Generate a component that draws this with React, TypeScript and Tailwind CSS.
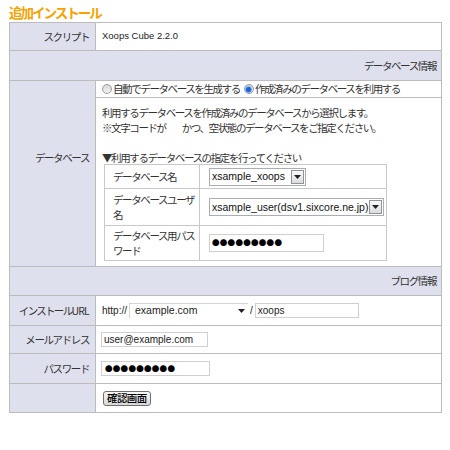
import React from "react";

function Radio({ checked }: { checked: boolean }) {
  return (
    <span className="inline-flex items-center justify-center w-[10px] h-[10px] rounded-full border border-[#9a9a9a] bg-gradient-to-b from-[#d6d6d6] to-[#f6f6f6] mr-[1px]">
      {checked ? <span className="w-[5px] h-[5px] rounded-full bg-[#1b62d6] ring-1 ring-[#7fb0f0]" /> : null}
    </span>
  );
}

function Arrow() {
  return (
    <svg width="7" height="4" viewBox="0 0 7 4">
      <path d="M0 0 L7 0 L3.5 4 Z" fill="#222" />
    </svg>
  );
}

function SelectBox({ text, cls }: { text: string; cls: string }) {
  return (
    <div className={"flex items-center h-[18px] border border-[#a9aeb6] bg-white " + cls}>
      <span className="flex-1 pl-[2px] font-['Liberation_Sans',sans-serif] text-[10.5px] tracking-normal text-[#111] leading-none whitespace-nowrap">{text}</span>
      <span className="flex items-center justify-center w-[13px] h-[14px] mr-[1px] border border-[#8e949c] bg-gradient-to-b from-[#fafafa] to-[#dcdcdc]">
        <Arrow />
      </span>
    </div>
  );
}

function Dots({ n }: { n: number }) {
  return (
    <span className="font-['Noto_Sans_CJK_JP',sans-serif] text-[7.5px] tracking-[0.3px] leading-none text-black">{"●".repeat(n)}</span>
  );
}

export default function App() {
  const line = "border-[#bcbcbc]";
  return (
    <div className="w-[450px] h-[450px] bg-white text-[#333] font-['Noto_Sans_CJK_JP',sans-serif] text-[10.5px] tracking-[-1.4px]">
      <div className="pl-[9px] h-[22px] pt-[4px] text-[13.5px] tracking-[-2px] leading-[16px] font-bold text-[#f5a300] whitespace-nowrap">追加インストール</div>
      <div className={"ml-[9px] w-[433px] border " + line}>
        {/* スクリプト */}
        <div className={"flex h-[28px] border-b " + line}>
          <div className={"w-[86px] shrink-0 border-r bg-[#dfe0ed] flex items-center justify-end pr-[6px] whitespace-nowrap " + line}>スクリプト</div>
          <div className="flex-1 flex items-center pl-[6px] font-['Liberation_Sans',sans-serif] text-[9.5px] tracking-normal text-[#222]">Xoops Cube 2.2.0</div>
        </div>
        {/* header */}
        <div className={"flex h-[30px] border-b bg-[#dfe0ed] items-center justify-end pr-[5px] " + line}>データベース情報</div>
        {/* database */}
        <div className={"flex h-[186px] border-b " + line}>
          <div className={"w-[86px] shrink-0 border-r bg-[#dfe0ed] flex justify-end pr-[6px] pt-[69px] leading-[15px] whitespace-nowrap " + line}>データベース</div>
          <div className="flex-1 flex flex-col">
            <div className={"h-[17px] border-b flex items-center pl-[6px] whitespace-nowrap " + line}>
              <Radio checked={false} />
              <span>自動でデータベースを生成する</span>
              <span className="w-[4px]" />
              <Radio checked={true} />
              <span>作成済みのデータベースを利用する</span>
            </div>
            <div className="pl-[6px] pt-[7px] leading-[15px] whitespace-nowrap">
              <div>利用するデータベースを作成済みのデータベースから選択します。</div>
              <div className="flex">
                <span>※文字コードが</span>
                <span className="inline-block w-[16px]" />
                <span>かつ、空状態のデータベースをご指定ください。</span>
              </div>
              <div className="h-[15px]" />
              <div>▼利用するデータベースの指定を行ってください</div>
              <div className="ml-[2px] w-[283px] border border-[#c8c8c8] mt-[-1px]">
                <div className="flex h-[24px] border-b border-[#c8c8c8]">
                  <div className="w-[95px] shrink-0 border-r border-[#c8c8c8] flex items-center pl-[8px]">データベース名</div>
                  <div className="flex-1 flex items-center pl-[9px]">
                    <SelectBox text="xsample_xoops" cls="w-[97px]" />
                  </div>
                </div>
                <div className="flex h-[37px] border-b border-[#c8c8c8]">
                  <div className="w-[95px] shrink-0 border-r border-[#c8c8c8] flex flex-col justify-center pl-[8px]">
                    <span>データベースユーザ</span>
                    <span>名</span>
                  </div>
                  <div className="flex-1 flex items-center pl-[9px]">
                    <SelectBox text="xsample_user(dsv1.sixcore.ne.jp)" cls="w-[175px]" />
                  </div>
                </div>
                <div className="flex h-[34px]">
                  <div className="w-[95px] shrink-0 border-r border-[#c8c8c8] flex flex-col justify-center pl-[8px]">
                    <span>データベース用パス</span>
                    <span>ワード</span>
                  </div>
                  <div className="flex-1 flex items-center pl-[9px]">
                    <div className="w-[115px] h-[18px] border border-[#d0d0d0] flex items-center pl-[2px]">
                      <Dots n={9} />
                    </div>
                  </div>
                </div>
              </div>
            </div>
          </div>
        </div>
        {/* header blog */}
        <div className={"flex h-[29px] border-b bg-[#dfe0ed] items-center justify-end pr-[5px] " + line}>ブログ情報</div>
        {/* URL */}
        <div className={"flex h-[30px] border-b " + line}>
          <div className={"w-[86px] shrink-0 border-r bg-[#dfe0ed] flex items-center justify-end pr-[6px] whitespace-nowrap tracking-[-1.7px] " + line}>
            インストール<span className="tracking-[-0.8px]">URL</span>
          </div>
          <div className="flex-1 flex items-center pl-[6px] font-['Liberation_Sans',sans-serif] text-[10px] tracking-normal text-[#222]">
            <span>http://</span>
            <div className="ml-[2px] w-[119px] h-[15px] border-t border-l border-[#d4d4d4] flex items-center pl-[5px] pr-[3px]">
              <span className="flex-1 text-[10.5px]">example.com</span>
              <Arrow />
            </div>
            <span className="mx-[2px]">/</span>
            <div className="w-[104px] h-[15px] border border-[#d0d0d0] flex items-center pl-[2px]">xoops</div>
          </div>
        </div>
        {/* mail */}
        <div className={"flex h-[28px] border-b " + line}>
          <div className={"w-[86px] shrink-0 border-r bg-[#dfe0ed] flex items-center justify-end pr-[6px] whitespace-nowrap " + line}>メールアドレス</div>
          <div className="flex-1 flex items-center pl-[5px]">
            <div className="w-[107px] h-[15px] border border-[#d0d0d0] flex items-center pl-[2px] font-['Liberation_Sans',sans-serif] text-[10px] tracking-normal text-[#222]">user@example.com</div>
          </div>
        </div>
        {/* password */}
        <div className={"flex h-[30px] border-b " + line}>
          <div className={"w-[86px] shrink-0 border-r bg-[#dfe0ed] flex items-center justify-end pr-[6px] whitespace-nowrap " + line}>パスワード</div>
          <div className="flex-1 flex items-center pl-[5px]">
            <div className="w-[109px] h-[15px] border border-[#d0d0d0] flex items-center pl-[3px]">
              <Dots n={9} />
            </div>
          </div>
        </div>
        {/* button */}
        <div className="flex h-[28px]">
          <div className={"w-[86px] shrink-0 border-r bg-[#dfe0ed] " + line} />
          <div className="flex-1 flex items-center pl-[7px]">
            <button className="h-[15px] px-[3px] border border-[#6f6f6f] rounded-[3px] bg-gradient-to-b from-[#f8f8f8] to-[#d8d8d8] text-[10.5px] font-medium tracking-[-0.6px] leading-none text-black">確認画面</button>
          </div>
        </div>
      </div>
    </div>
  );
}
